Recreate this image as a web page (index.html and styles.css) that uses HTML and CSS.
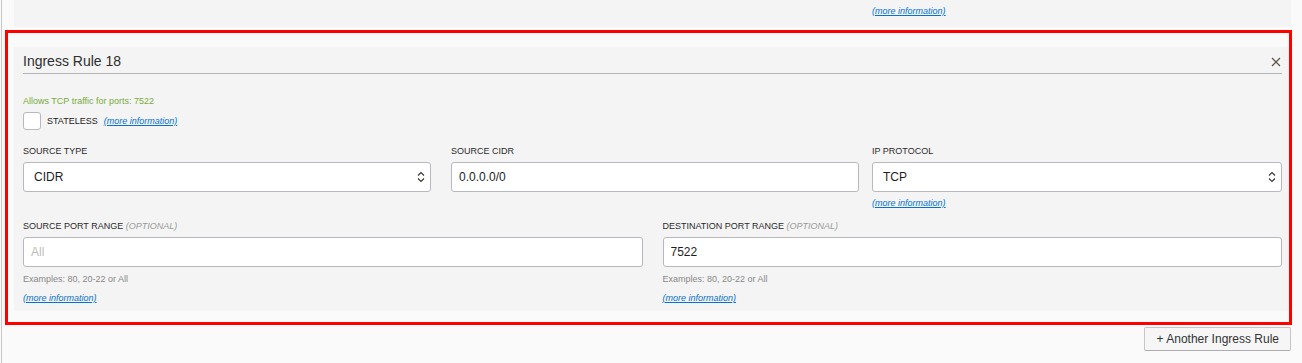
FILE: index.html
```html
<!DOCTYPE html>
<html lang="en">
<head>
    <meta charset="UTF-8">
    <meta name="viewport" content="width=device-width, initial-scale=1.0">
    <title>Ingress Rules</title>
    <link rel="stylesheet" href="styles.css">
</head>
<body>
    <div class="page">
        <div class="rule-prev">
            <div class="row-three">
                <div class="field"></div>
                <div class="field"></div>
                <div class="field"><a class="more" href="#">(more information)</a></div>
            </div>
        </div>

        <div class="rule">
            <div class="rule-head">
                <div class="rule-title">Ingress Rule 18</div>
                <svg class="close" width="10" height="10" viewBox="0 0 10 10">
                    <path d="M1 1 L9 9 M9 1 L1 9" stroke="#5b5040" stroke-width="1.1" fill="none"/>
                </svg>
            </div>

            <div class="allows">Allows TCP traffic for ports: 7522</div>
            <div class="stateless">
                <span class="checkbox"></span>
                <span class="small-label">STATELESS</span>
                <a class="more" href="#">(more information)</a>
            </div>

            <div class="row-three">
                <div class="field">
                    <div class="label">SOURCE TYPE</div>
                    <div class="input select">
                        <span>CIDR</span>
                        <svg width="8" height="12" viewBox="0 0 8 12">
                            <path d="M1 4.5 L4 1.5 L7 4.5 M1 7.5 L4 10.5 L7 7.5" stroke="#333" stroke-width="1.1" fill="none"/>
                        </svg>
                    </div>
                </div>
                <div class="field">
                    <div class="label">SOURCE CIDR</div>
                    <input class="input text" type="text" value="0.0.0.0/0">
                </div>
                <div class="field">
                    <div class="label">IP PROTOCOL</div>
                    <div class="input select">
                        <span>TCP</span>
                        <svg width="8" height="12" viewBox="0 0 8 12">
                            <path d="M1 4.5 L4 1.5 L7 4.5 M1 7.5 L4 10.5 L7 7.5" stroke="#333" stroke-width="1.1" fill="none"/>
                        </svg>
                    </div>
                    <a class="more under" href="#">(more information)</a>
                </div>
            </div>

            <div class="row-two">
                <div class="field">
                    <div class="label">SOURCE PORT RANGE <em>(OPTIONAL)</em></div>
                    <input class="input text" type="text" placeholder="All">
                    <div class="hint">Examples: 80, 20-22 or All</div>
                    <a class="more hint-link" href="#">(more information)</a>
                </div>
                <div class="field">
                    <div class="label">DESTINATION PORT RANGE <em>(OPTIONAL)</em></div>
                    <input class="input text" type="text" value="7522">
                    <div class="hint">Examples: 80, 20-22 or All</div>
                    <a class="more hint-link" href="#">(more information)</a>
                </div>
            </div>
        </div>

        <div class="actions">
            <button class="add-btn">+ Another Ingress Rule</button>
        </div>
    </div>

    <div class="highlight"></div>
</body>
</html>
```

FILE: styles.css
```css
* {
    margin: 0;
    padding: 0;
    box-sizing: border-box;
}

body {
    position: relative;
    height: 363px;
    overflow: hidden;
    background-color: #fafafa;
    font-family: "Liberation Sans", Arial, sans-serif;
    color: #333;
}

.page {
    margin-left: 1px;
    border-left: 1px solid #c8c8c8;
    height: 363px;
    padding: 0 11px 0 12px;
}

/* previous rule, cut off at the top */
.rule-prev {
    background-color: #f4f4f4;
    height: 27px;
    padding: 5px 9px 0;
}

.rule {
    margin-top: 20px;
    background-color: #f4f4f4;
    padding: 0 9px 7px;
}

.rule-head {
    display: flex;
    justify-content: space-between;
    align-items: center;
    padding: 5px 0 3px;
    border-bottom: 1px solid #b5b5b8;
}
.rule-title {
    font-size: 14px;
    line-height: 18px;
    color: #2e2e2e;
}
.close {
    margin-right: 1px;
    margin-top: 1px;
}

.allows {
    margin-top: 21px;
    font-size: 9px;
    line-height: 12px;
    color: #78ab3c;
}

.stateless {
    display: flex;
    align-items: center;
    margin-top: 5px;
}
.checkbox {
    width: 18px;
    height: 18px;
    background-color: #fff;
    border: 1px solid #b9b9bd;
    border-radius: 3px;
    margin-right: 6px;
}
.small-label {
    font-size: 9px;
    line-height: 12px;
    color: #222;
    margin-right: 6px;
}

.more {
    font-size: 9px;
    line-height: 12px;
    font-style: italic;
    color: #0572ce;
    text-decoration: underline;
}

.row-three {
    display: flex;
    margin-top: 15px;
}
.rule-prev .row-three {
    margin-top: 0;
}
.row-three .field:nth-child(1) {
    width: 408px;
    margin-right: 20px;
}
.row-three .field:nth-child(2) {
    width: 408px;
    margin-right: 13px;
}
.row-three .field:nth-child(3) {
    flex: 1;
}

.row-two {
    display: grid;
    grid-template-columns: 1fr 1fr;
    column-gap: 20px;
    margin-top: 11px;
}

.field {
    display: flex;
    flex-direction: column;
    align-items: flex-start;
}

.label {
    font-size: 9px;
    line-height: 12px;
    color: #2b2b2b;
    margin-bottom: 5px;
}
.label em {
    color: #9a9a9a;
}

.input {
    width: 100%;
    height: 30px;
    background-color: #fff;
    border: 1px solid #b8b9bf;
    border-radius: 3px;
    font-family: "Liberation Sans", Arial, sans-serif;
    font-size: 12px;
    color: #1e1e1e;
}
.input.text {
    padding: 0 7px;
    outline: none;
}
.input.text::placeholder {
    color: #bdbdbd;
}
.select {
    display: flex;
    justify-content: space-between;
    align-items: center;
    padding: 0 5px 0 10px;
}

.under {
    margin-top: 5px;
}

.hint {
    margin-top: 6px;
    font-size: 9px;
    line-height: 12px;
    color: #888;
}
.hint-link {
    margin-top: 7px;
}

.actions {
    display: flex;
    justify-content: flex-end;
    margin-top: 16px;
}
.add-btn {
    height: 24px;
    padding: 0 11px 0 12px;
    background-color: #f6f6f6;
    border: 1px solid #c6c6c9;
    border-bottom-color: #aeaeb2;
    border-radius: 2px;
    font-family: "Liberation Sans", Arial, sans-serif;
    font-size: 12px;
    color: #333;
}

/* red annotation box drawn over the rule */
.highlight {
    position: absolute;
    left: 5px;
    top: 30px;
    width: 1287px;
    height: 295px;
    border: 3px solid #ff0000;
    pointer-events: none;
}
```
